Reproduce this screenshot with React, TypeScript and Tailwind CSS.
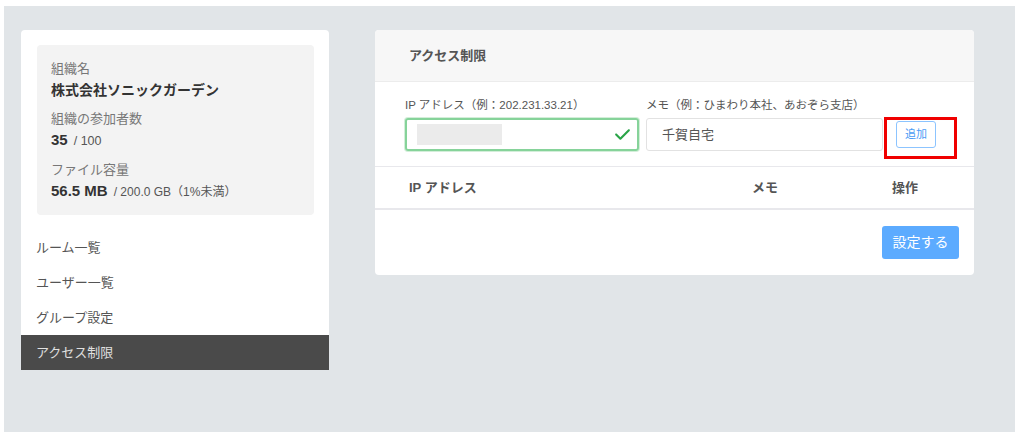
import { FaCheck } from "react-icons/fa6";

const font = { fontFamily: '"Liberation Sans", "Noto Sans CJK JP", sans-serif' };

const menu = ["ルーム一覧", "ユーザー一覧", "グループ設定", "アクセス制限"];

const Stat = ({ label, children }: { label: string; children: React.ReactNode }) => (
  <div className="mb-[8px]">
    <div className="text-[13px] leading-[20px] text-[#777]">{label}</div>
    <div className="text-[15px] leading-[22px] text-[#333]">{children}</div>
  </div>
);

const Sidebar = () => (
  <div className="w-[308px] shrink-0 self-start rounded-t-[4px] bg-white pt-[15px]">
    <div className="ml-[16px] mr-[15px] rounded-[4px] bg-[#f3f3f3] pl-[14px] pt-[14px] pb-[4px]">
      <Stat label="組織名">
        <span className="text-[14px] font-bold">株式会社ソニックガーデン</span>
      </Stat>
      <Stat label="組織の参加者数">
        <span className="font-bold">35</span>
        <span className="ml-[6px] text-[12.5px] text-[#555]">/ 100</span>
      </Stat>
      <Stat label="ファイル容量">
        <span className="font-bold">56.5 MB</span>
        <span className="ml-[6px] text-[12px] text-[#555]">/ 200.0 GB（1%未満）</span>
      </Stat>
    </div>
    <ul className="mt-[15px]">
      {menu.map((item, i) => (
        <li
          key={item}
          className={
            i === 3
              ? "flex h-[35px] items-center bg-[#4a4a4a] pl-[15px] text-[13px] text-[#e0e0e0]"
              : "flex h-[35px] items-center pl-[15px] text-[13px] text-[#555]"
          }
        >
          {item}
        </li>
      ))}
    </ul>
  </div>
);

const AccessPanel = () => (
  <div className="w-[599px] shrink-0 self-start overflow-hidden rounded-[4px] bg-white">
    <div className="flex h-[52px] items-center border-b border-[#ececec] bg-[#f7f7f7] px-[34px]">
      <h2 className="text-[13px] font-bold text-[#555]">アクセス制限</h2>
    </div>

    <div className="flex items-end px-[30px] pt-[15px] pb-[15px]">
      <div className="w-[234px]">
        <div className="mb-[5px] text-[11.5px] leading-[16px] text-[#555]">IP アドレス（例：202.231.33.21）</div>
        <div className="flex h-[33px] items-center justify-between rounded-[3px] border-2 border-[#86d39a] pl-[10px] pr-[6px] shadow-[0_0_0_1px_#d3eed9]">
          <div className="h-[21px] w-[85px] bg-[#ebebeb]" />
          <FaCheck className="text-[#2aa448]" size={17} />
        </div>
      </div>
      <div className="ml-[7px] w-[237px]">
        <div className="mb-[5px] text-[11.5px] leading-[16px] text-[#555]">メモ（例：ひまわり本社、あおぞら支店）</div>
        <div className="flex h-[33px] items-center rounded-[3px] border border-[#e2e2e2] pl-[15px] text-[13px] text-[#555]">
          千賀自宅
        </div>
      </div>
      <div className="relative ml-[13px] flex h-[33px] items-center">
        <button className="h-[27px] rounded-[3px] border border-[#8cc4ff] bg-white px-[8px] text-[11px] text-[#4a9cf5]">
          追加
        </button>
        <div className="pointer-events-none absolute -left-[12px] -top-[1px] h-[42px] w-[73px] border-[3px] border-[#f00000]" />
      </div>
    </div>

    <div className="flex h-[44px] items-center border-t border-b-2 border-[#e8e8ec] pl-[34px] text-[13px] font-bold text-[#555]">
      <div className="w-[343px]">IP アドレス</div>
      <div className="w-[140px]">メモ</div>
      <div>操作</div>
    </div>

    <div className="flex justify-end px-[15px] pt-[16px] pb-[16px]">
      <button className="h-[33px] w-[77px] rounded-[3px] bg-[#5cabff] text-[14px] text-white">設定する</button>
    </div>
  </div>
);

export default function App() {
  return (
    <div className="h-[447px] w-full bg-white pt-[6px] pl-[4px] pr-[9px] pb-[15px]" style={font}>
      <div className="flex h-full gap-[46px] bg-[#e1e5e8] pl-[17px] pt-[24px]">
        <Sidebar />
        <AccessPanel />
      </div>
    </div>
  );
}
